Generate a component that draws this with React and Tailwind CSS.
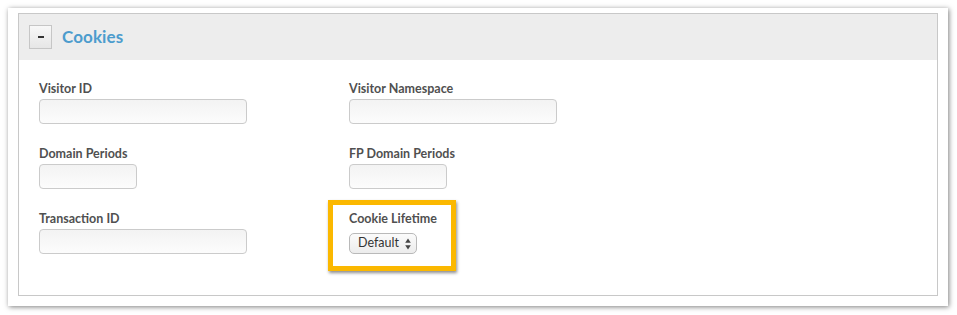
import React from 'react';

const font = { fontFamily: 'Lato, "Open Sans", sans-serif' };

function Field({ label, width }) {
  return (
    <div className="flex flex-col">
      <label className="text-[12.5px] leading-4 font-bold text-[#505050]">{label}</label>
      <input
        type="text"
        className={`mt-[2px] h-[25px] ${width} rounded-[4px] border border-[#cbcbcb] bg-linear-to-b from-[#f3f3f3] to-[#fcfcfc] outline-none`}
      />
    </div>
  );
}

export default function App() {
  return (
    <div className="w-[957px] h-[315px] bg-white pt-2 pl-2" style={font}>
      <div className="w-[940px] h-[298px] bg-white shadow-[1px_1px_5px_rgba(0,0,0,0.5)] pt-[5px] px-[10px]">
        <div className="border border-[#c8c8c8] h-[283px] flex flex-col">
          {/* Header */}
          <div className="h-[46px] bg-[#ededed] flex items-center px-[10px] gap-[10px]">
            <button className="w-[23px] h-[24px] border border-[#c6c6c6] bg-linear-to-b from-[#f8f8f8] to-[#e6e6e6] flex items-center justify-center">
              <span className="block w-[6px] h-[1.5px] bg-[#333]" />
            </button>
            <h3 className="text-[17px] font-bold text-[#4c9ccd] tracking-[0.1px]">Cookies</h3>
          </div>

          {/* Body */}
          <div className="grid grid-cols-[310px_1fr] gap-y-[22px] pl-5 pt-[21px]">
            <Field label="Visitor ID" width="w-[208px]" />
            <Field label="Visitor Namespace" width="w-[208px]" />
            <Field label="Domain Periods" width="w-[98px]" />
            <Field label="FP Domain Periods" width="w-[98px]" />
            <Field label="Transaction ID" width="w-[208px]" />
            <div className="relative flex flex-col">
              <div className="absolute -left-[21px] -top-[11px] w-[128px] h-[71px] border-[5px] border-[#fbb800] shadow-[1px_2px_3px_rgba(0,0,0,0.45)] pointer-events-none" />
              <label className="text-[12.5px] leading-4 font-bold text-[#505050]">Cookie Lifetime</label>
              <div className="mt-[6px] w-[68px] h-[21px] rounded-[5px] border border-[#b9b9b9] bg-linear-to-b from-[#fbfbfb] to-[#ececec] flex items-center justify-between pl-[8px] pr-[5px]">
                <span className="text-[12.5px] text-[#333]">Default</span>
                <svg width="6" height="12" viewBox="0 0 6 12">
                  <path d="M3 0.5 L5.8 4.8 L0.2 4.8 Z" fill="#444" />
                  <path d="M3 11.5 L5.8 7.2 L0.2 7.2 Z" fill="#444" />
                </svg>
              </div>
            </div>
          </div>
        </div>
      </div>
    </div>
  );
}
